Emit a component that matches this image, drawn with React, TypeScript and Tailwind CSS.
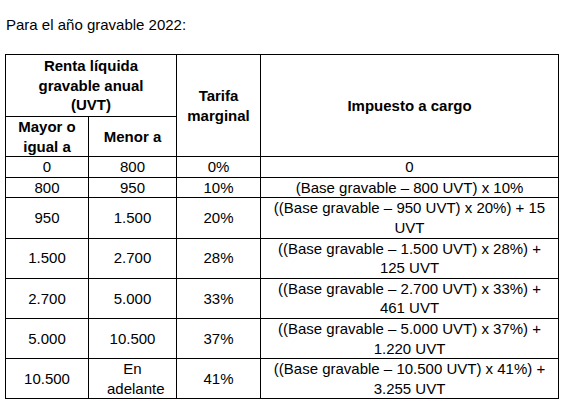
import React from "react";

const rows: [string, string, string, string][] = [
  ["0", "800", "0%", "0"],
  ["800", "950", "10%", "(Base gravable – 800 UVT) x 10%"],
  ["950", "1.500", "20%", "((Base gravable – 950 UVT) x 20%) + 15 UVT"],
  ["1.500", "2.700", "28%", "((Base gravable – 1.500 UVT) x 28%) + 125 UVT"],
  ["2.700", "5.000", "33%", "((Base gravable – 2.700 UVT) x 33%) + 461 UVT"],
  ["5.000", "10.500", "37%", "((Base gravable – 5.000 UVT) x 37%) + 1.220 UVT"],
  ["10.500", "En adelante", "41%", "((Base gravable – 10.500 UVT) x 41%) + 3.255 UVT"],
];

export default function App() {
  const cell = "border border-black p-0 text-center align-middle";
  return (
    <div
      className="w-[570px] h-[410px] bg-white text-black text-[15px] leading-[19.6px] overflow-hidden"
      style={{ fontFamily: '"Liberation Sans", Arial, sans-serif' }}
    >
      <p className="pl-[6px] pt-[15px] leading-[20px]">Para el año gravable 2022:</p>
      <table className="ml-[5px] mt-[19px] w-[553px] table-fixed border-collapse">
        <colgroup>
          <col className="w-[83px]" />
          <col className="w-[88px]" />
          <col className="w-[84px]" />
          <col className="w-[298px]" />
        </colgroup>
        <thead>
          <tr>
            <th colSpan={2} className={`${cell} font-bold h-[62px] px-[14px]`}>
              Renta líquida gravable anual (UVT)
            </th>
            <th rowSpan={2} className={`${cell} font-bold`}>
              Tarifa marginal
            </th>
            <th rowSpan={2} className={`${cell} font-bold`}>
              Impuesto a cargo
            </th>
          </tr>
          <tr>
            <th className={`${cell} font-bold h-[39px]`}>Mayor o igual a</th>
            <th className={`${cell} font-bold`}>Menor a</th>
          </tr>
        </thead>
        <tbody>
          {rows.map((r, i) => (
            <tr key={i}>
              <td className={cell}>{r[0]}</td>
              <td className={`${cell} ${i === 6 ? "px-[18px]" : ""}`}>{r[1]}</td>
              <td className={cell}>{r[2]}</td>
              <td className={`${cell} px-[8px]`}>{r[3]}</td>
            </tr>
          ))}
        </tbody>
      </table>
    </div>
  );
}
